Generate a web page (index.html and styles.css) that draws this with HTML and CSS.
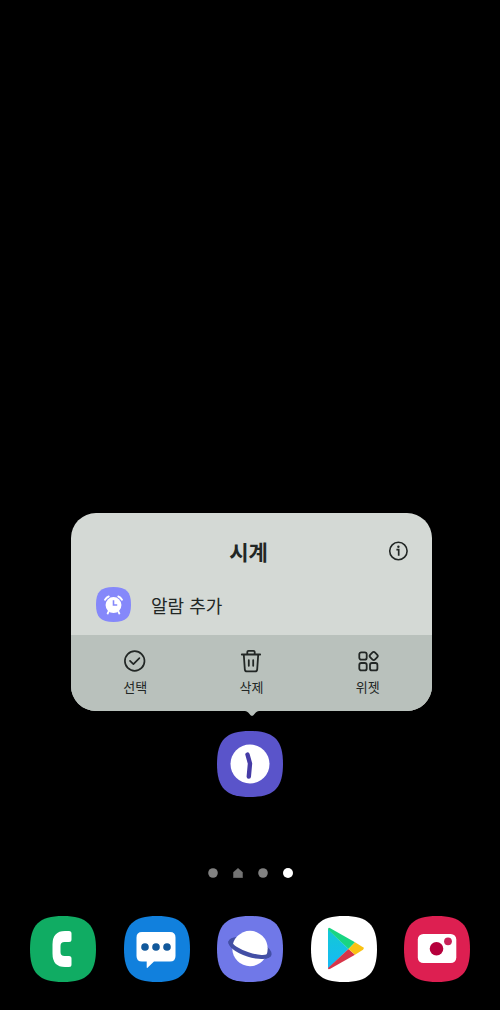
FILE: index.html
```html
<!DOCTYPE html>
<html lang="ko">
<head>
<meta charset="utf-8">
<meta name="viewport" content="width=device-width, initial-scale=1">
<title>시계</title>
<link rel="stylesheet" href="styles.css">
</head>
<body>
<main class="home">
  <section class="popup" aria-labelledby="popup-title">
    <div class="popup-card">
      <div class="popup-top">
        <header class="popup-header">
          <h1 class="popup-title" id="popup-title">시계</h1>
          <button class="info" type="button" aria-label="앱 정보">
            <svg class="info-icon" viewBox="0 0 20 20" fill="none" stroke="#222725" stroke-width="1.6"><circle cx="10.400" cy="10" r="8.700"/><path d="M8.400 8.700h2.300v6.100" stroke-width="1.700"/><circle cx="10.400" cy="5.800" r="1.200" fill="#222725" stroke="none"/></svg>
          </button>
        </header>
        <button class="shortcut" type="button">
          <svg class="shortcut-icon" viewBox="0 0 66 66"><path fill="#8588fa" d="M33 0C57 0 66 9 66 33S57 66 33 66 0 57 0 33 9 0 33 0Z"/><circle cx="33" cy="34" r="15" fill="#fff"/><path d="M17 24q3-5 7-6M49 24q-3-5-7-6M24 46l-2 4M42 46l2 4" fill="none" stroke="#fff" stroke-width="3.6" stroke-linecap="round"/><path d="M33 25v9h7" fill="none" stroke="#8588fa" stroke-width="3"/></svg>
          <span>알람 추가</span>
        </button>
      </div>
      <div class="actions">
        <button class="action" type="button">
          <svg class="action-icon" viewBox="0 0 24 24" fill="none" stroke="#222725" stroke-width="1.7" stroke-linecap="round" stroke-linejoin="round"><circle cx="11.700" cy="12" r="9.800"/><path d="M7 11.800l3.400 3.400 6-6"/></svg>
          <span>선택</span>
        </button>
        <button class="action" type="button">
          <svg class="action-icon" viewBox="0 0 24 24" fill="none" stroke="#222725" stroke-width="1.8" stroke-linecap="round" stroke-linejoin="round"><path d="M2.8 5.5h18.4M8.3 5.3V3q0-1.2 1.200-1.200h5q1.200 0 1.200 1.200v2.300M4.800 5.700l1 14.600q.2 2.100 2.200 2.100h8q2 0 2.200-2.100l1-14.600M9.800 11.200v5.600M14.200 11.200v5.600"/></svg>
          <span>삭제</span>
        </button>
        <button class="action" type="button">
          <svg class="action-icon" viewBox="0 0 24 24" fill="none" stroke="#222725" stroke-width="1.8" stroke-linejoin="round"><rect x="3.300" y="3.300" width="7.400" height="7.400" rx="2"/><rect x="3.300" y="14" width="7.400" height="7.400" rx="2"/><rect x="14" y="14" width="7.400" height="7.400" rx="2"/><rect x="14.300" y="3.600" width="6.800" height="6.800" rx="2" transform="rotate(45 17.700 7)"/></svg>
          <span>위젯</span>
        </button>
      </div>
    </div>
    <svg class="pointer" viewBox="0 0 14 6"><path fill="#b9c1bc" d="M0 0h14Q12 .2 10.800 1.500L8.400 4.200q-1.400 1.200-2.800 0L3.200 1.500Q2 .2 0 0Z"/></svg>
  </section>

  <a class="app clock" href="#clock" aria-label="시계">
    <svg class="app-icon" viewBox="0 0 66 66"><path fill="#5a54ca" d="M33 0C57 0 66 9 66 33S57 66 33 66 0 57 0 33 9 0 33 0Z"/><circle cx="33" cy="33" r="19.500" fill="#fff"/><path d="M30.500 23.500L33 32.500 31.800 45.500" fill="none" stroke="#453ba6" stroke-width="4.400" stroke-linecap="round" stroke-linejoin="round"/></svg>
  </a>

  <nav class="pages" aria-label="페이지">
    <a class="page" href="#page1" aria-label="1"><svg class="page-icon" viewBox="0 0 10 10"><circle cx="5" cy="5" r="4.800" fill="#828282"/></svg></a>
    <a class="page" href="#home" aria-label="홈"><svg class="page-icon" viewBox="0 0 10 10"><path d="M5 .3L9.600 4.200V9.700H.4V4.200Z" fill="#737373" stroke="#737373" stroke-width=".4" stroke-linejoin="round"/></svg></a>
    <a class="page" href="#page2" aria-label="2"><svg class="page-icon" viewBox="0 0 10 10"><circle cx="5" cy="5" r="4.800" fill="#828282"/></svg></a>
    <a class="page" href="#page3" aria-label="3" aria-current="page"><svg class="page-icon" viewBox="0 0 10 10"><circle cx="5" cy="5" r="5" fill="#fff"/></svg></a>
  </nav>

  <nav class="dock" aria-label="앱">
    <a class="app" href="#phone" aria-label="전화">
      <svg class="app-icon" viewBox="0 0 66 66"><path fill="#10ac63" d="M33 0C57 0 66 9 66 33S57 66 33 66 0 57 0 33 9 0 33 0Z"/><path fill="#fff" d="M35 15h4q2.500 0 2.500 2.500v6q0 2.500-2.500 2.500h-4.500q-4 0-4 4v6q0 4 4 4H39q2.500 0 2.500 2.500v6q0 2.500-2.500 2.500h-4Q22.500 51 22.500 37.500v-9Q22.500 15 35 15Z"/></svg>
    </a>
    <a class="app" href="#messages" aria-label="메시지">
      <svg class="app-icon" viewBox="0 0 66 66"><path fill="#1180dd" d="M33 0C57 0 66 9 66 33S57 66 33 66 0 57 0 33 9 0 33 0Z"/><path fill="#fff" d="M18 16h28q5.500 0 5.500 5.500v18.500q0 5.500-5.500 5.500H30l-6.500 6.300q-.8.600-.8-.5v-5.800H18q-5.500 0-5.500-5.500V21.500Q12.500 16 18 16Z"/><g fill="#11589b"><circle cx="21" cy="31" r="3.800"/><circle cx="32" cy="31" r="3.800"/><circle cx="43" cy="31" r="3.800"/></g></svg>
    </a>
    <a class="app" href="#internet" aria-label="인터넷">
      <svg class="app-icon" viewBox="0 0 66 66"><path fill="#7078e8" d="M33 0C57 0 66 9 66 33S57 66 33 66 0 57 0 33 9 0 33 0Z"/><ellipse rx="22.500" ry="9" transform="translate(33 32) rotate(18)" fill="#434fa5"/><circle cx="33" cy="32.500" r="17.700" fill="#fff"/><path d="M-22.500 0A22.500 9 0 0 0 22.500 0L18.500-.5A18.500 5 0 0 1-18.500-.5Z" transform="translate(33 32) rotate(18)" fill="#434fa5"/></svg>
    </a>
    <a class="app" href="#play" aria-label="Play 스토어">
      <svg class="app-icon" viewBox="0 0 66 66"><defs><linearGradient id="play-blue" x1="0" y1="0" x2="0" y2="1"><stop offset="0" stop-color="#13c9d4"/><stop offset="1" stop-color="#16b9f6"/></linearGradient></defs><path fill="#fff" d="M33 0C57 0 66 9 66 33S57 66 33 66 0 57 0 33 9 0 33 0Z"/><path fill="url(#play-blue)" d="M17 13v39.500L37.500 33Z"/><path fill="#18d583" d="M17 13.500q0-2.500 2.300-1.300L44 26.200 37.500 33Z"/><path fill="#d83549" d="M17 52q0 2 2.300.8L44 38.800 37.500 33Z"/><path fill="#fac213" d="M44 26.200L52 31.200q1.700 1.300 0 2.600L44 38.800 37.500 33Z"/></svg>
    </a>
    <a class="app" href="#camera" aria-label="카메라">
      <svg class="app-icon" viewBox="0 0 66 66"><path fill="#dd1f51" d="M33 0C57 0 66 9 66 33S57 66 33 66 0 57 0 33 9 0 33 0Z"/><rect x="13.800" y="18" width="38.500" height="29" rx="5.500" fill="#fff"/><circle cx="32.500" cy="32.800" r="6.800" fill="#b6003c"/><circle cx="44" cy="25.300" r="3.900" fill="#c92259"/></svg>
    </a>
  </nav>
</main>
</body>
</html>
```
FILE: styles.css
```css
* {
  box-sizing: border-box;
}

body {
  margin: 0;
  background: #000;
  color: #222725;
  font-family: "Noto Sans CJK KR", "Noto Sans", sans-serif;
}

button {
  margin: 0;
  padding: 0;
  border: 0;
  background: none;
  color: inherit;
  font: inherit;
  cursor: pointer;
}

svg {
  display: block;
}

.home {
  display: flex;
  flex-direction: column;
  justify-content: flex-end;
  min-height: 100vh;
  padding-bottom: 28px;
}

.popup {
  display: flex;
  flex-direction: column;
  align-items: center;
  margin: 0 68px 0 71px;
}

.popup-card {
  width: 100%;
  overflow: hidden;
  border-radius: 25px;
  background: #d4d9d5;
}

.popup-top {
  padding: 22px 24px 13px;
}

.popup-header {
  display: grid;
  grid-template-columns: 20px 1fr 20px;
  align-items: center;
  margin-bottom: 20px;
}

.popup-title {
  grid-column: 2;
  margin: 0;
  padding-right: 6px;
  font-size: 21px;
  font-weight: 700;
  line-height: 32px;
  text-align: center;
}

.info-icon {
  width: 20px;
  height: 20px;
}

.shortcut {
  display: flex;
  align-items: center;
  gap: 20px;
  width: 100%;
  padding-left: 1px;
  font-size: 18px;
  line-height: 28px;
}

.shortcut-icon {
  width: 35px;
  height: 35px;
}

.actions {
  display: grid;
  grid-template-columns: repeat(3, 1fr);
  padding: 14px 6px;
  background: #b9c1bc;
}

.action {
  display: flex;
  flex-direction: column;
  align-items: center;
  gap: 4px;
  font-size: 13px;
  line-height: 20px;
}

.action-icon {
  width: 24px;
  height: 24px;
}

.pointer {
  width: 14px;
  height: 6px;
}

.clock {
  align-self: center;
  margin: 14px 0 71px;
}

.app-icon {
  width: 66px;
  height: 66px;
}

.pages {
  display: flex;
  justify-content: center;
  gap: 15px;
  margin-bottom: 38px;
}

.page-icon {
  width: 10px;
  height: 10px;
}

.dock {
  display: flex;
  justify-content: space-between;
  padding: 0 30px;
}
```
